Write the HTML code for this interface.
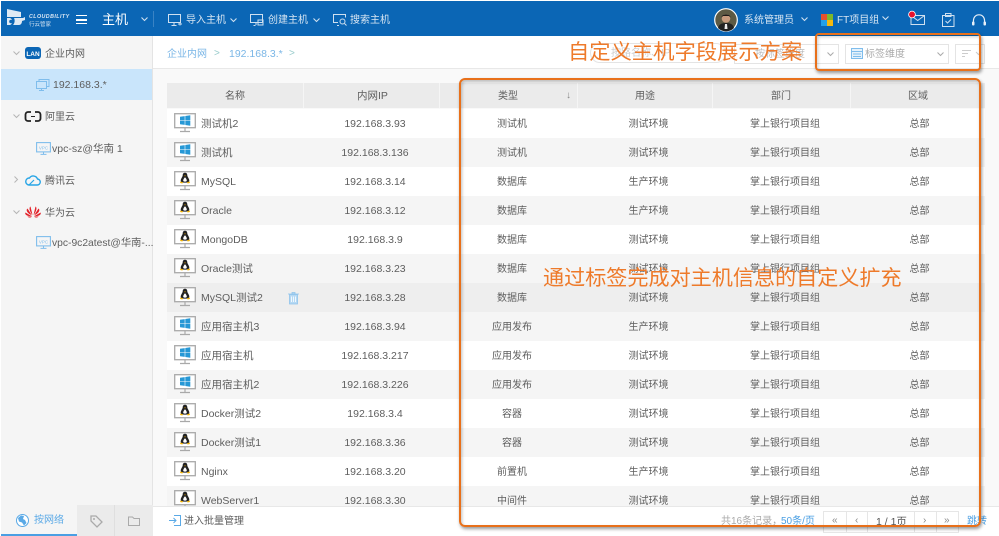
<!DOCTYPE html>
<html lang="zh"><head><meta charset="utf-8"><style>
html,body{margin:0;padding:0;width:999px;height:536px;overflow:hidden;background:#fff}
body{position:relative;font:10px/14px "Liberation Sans","Noto Sans CJK SC",sans-serif;color:#5e5e5e;filter:blur(.3px)}
.a{position:absolute;white-space:nowrap}
svg{position:absolute;overflow:visible}
#rows{position:absolute;left:167px;top:109px;width:818px;height:397px;overflow:hidden}
.r{display:flex;height:29px;line-height:31px;background:#fff;position:relative}
.r:nth-child(even){background:#f5f5f5}
.r.h{background:#eee}
.r svg{left:7px;top:4px}
.r b{font-weight:400;text-align:center;display:block}
.n{width:140px;text-align:left!important;padding-left:34px;box-sizing:border-box;font-size:10.5px;line-height:30px}
.c2{width:136px;font-size:10.5px}.c3{width:138px}.c4{width:135px}.c5{width:138px}.c6{width:131px}
.s{stroke:#cfe0f0;fill:none;stroke-width:1}
.chev{fill:none;stroke:#cfe0f0;stroke-width:1.1}
</style></head><body>
<svg width="0" height="0" style="position:absolute"><defs>
<symbol id="win" viewBox="0 0 22 20"><rect x=".7" y=".7" width="20.6" height="14" fill="#fff" stroke="#a9a9a9" stroke-width="1.3"/><path d="M11 15v3M6 18.5h10" stroke="#a9a9a9" stroke-width="1.2"/><path d="M6 3.800l4.700-.7v4.100H6zM11.300 3l5-.7v4.900h-5zM6 7.800h4.700v4.100L6 11.200zM11.300 7.800h5v4.900l-5-.7z" fill="#2698d6"/></symbol>
<symbol id="lin" viewBox="0 0 22 20"><rect x=".7" y=".7" width="20.6" height="14" fill="#fff" stroke="#a9a9a9" stroke-width="1.3"/><path d="M11 15v3M6 18.500h10" stroke="#a9a9a9" stroke-width="1.2"/><path d="M11 1.800c-1.600 0-2.300 1.100-2.300 2.600 0 1.400-2 3.200-2 5.300 0 1 .8 1.900 4.300 1.900s4.300-.9 4.300-1.900c0-2.100-2-3.900-2-5.300 0-1.500-.7-2.600-2.300-2.600z" fill="#222"/><path d="M11 6.200c-1.200 1.100-1.800 2.300-1.800 3.500s3.600 1.200 3.600 0-.6-2.400-1.800-3.500z" fill="#fff"/><path d="M10.100 4.500h1.800l-.9 1zM6.400 10.500l2.600.7-.6 1.300-2.300-.5zM15.600 10.500l-2.600.7.600 1.300 2.300-.5z" fill="#f4b400"/></symbol>
<symbol id="vpc" viewBox="0 0 15 13"><rect x=".6" y=".6" width="13.800" height="9.300" fill="none" stroke="#7fbdec" stroke-width="1.100"/><path d="M7.500 10v2M4.500 12.400h6" stroke="#7fbdec"/><text x="7.500" y="7.600" font-size="4.500" text-anchor="middle" fill="#7fbdec" font-family="Liberation Sans">VPC</text></symbol>
</defs></svg>

<!-- top bar -->
<div class="a" style="left:1px;top:1px;width:998px;height:35px;background:#0b66b5"></div>
<svg style="left:7px;top:9px" width="20" height="20" viewBox="0 0 20 20"><path d="M0 0l14 3v5l-14 0zM0 9h3c3 1 3 6 0 7H0zM7 9h9l2-1v3l-3 1c0 2-1 4-3 4H6c2-2 2-5 1-7z" fill="#dfeaf4"/><circle cx="4" cy="12.500" r="1.800" fill="#0b66b5"/></svg>
<div class="a" style="left:29px;top:14px;font:italic 700 5.300px/7px 'Liberation Sans',sans-serif;color:#dbe8f4;letter-spacing:.45px">CLOUDBILITY</div>
<div class="a" style="left:29px;top:21px;font-size:5.500px;line-height:8px;color:#cfe0f0">行云管家</div>
<div class="a" style="left:76px;top:15px;width:11px;height:9px;border-top:1.500px solid #fff;border-bottom:1.500px solid #fff;box-sizing:border-box"></div>
<div class="a" style="left:76px;top:19px;width:11px;height:1.500px;background:#fff"></div>
<div class="a" style="left:102px;top:12px;font-size:13px;line-height:16px;color:#fff">主机</div>
<svg style="left:141px;top:17px" width="7" height="5"><path class="chev" d="M.5 .5L3.500 3.500 6.500 .5"/></svg>
<div class="a" style="left:153px;top:11px;width:1px;height:16px;background:#3a83c4"></div>

<svg style="left:168px;top:14px" width="14" height="12"><rect class="s" x=".5" y=".5" width="12" height="8"/><path class="s" d="M6 9v2M3.500 11.500h5M10 10h4M12 8.500v3"/></svg>
<div class="a" style="left:186px;top:14px;color:#d7e5f2">导入主机</div>
<svg style="left:230px;top:18px" width="7" height="5"><path class="chev" d="M.5 .5L3.500 3.500 6.500 .5"/></svg>
<svg style="left:250px;top:14px" width="14" height="12"><rect class="s" x=".5" y=".5" width="12" height="8"/><path class="s" d="M6 9v2M3.500 11.500h2"/><rect class="s" x="8" y="6" width="5" height="5" fill="#0b66b5"/></svg>
<div class="a" style="left:268px;top:14px;color:#d7e5f2">创建主机</div>
<svg style="left:313px;top:18px" width="7" height="5"><path class="chev" d="M.5 .5L3.500 3.500 6.500 .5"/></svg>
<svg style="left:333px;top:14px" width="14" height="12"><path class="s" d="M5 8.500H.5v-8h12v3M4 11.500h2"/><circle class="s" cx="9.500" cy="7.500" r="2.500"/><path class="s" d="M11.500 9.500l2 2"/></svg>
<div class="a" style="left:350px;top:14px;color:#d7e5f2">搜索主机</div>

<svg style="left:714px;top:8px" width="24" height="24" viewBox="0 0 24 24"><circle cx="12" cy="12" r="11.300" fill="#5d5a44" stroke="#fff" stroke-width="1.200"/><path d="M4 20c1-4 4-5 8-5s7 1 8 5a11 11 0 0 1-16 0z" fill="#222"/><circle cx="12" cy="10.500" r="4.300" fill="#c79a7c"/><path d="M7.500 9.500c0-4 9-4 9 0l-1.500-1.500h-6z" fill="#1d1a18"/><path d="M11 16h2l.5 5h-3z" fill="#eee"/></svg>
<div class="a" style="left:744px;top:14px;color:#d7e5f2">系统管理员</div>
<svg style="left:801px;top:17px" width="7" height="5"><path class="chev" d="M.5 .5L3.500 3.500 6.500 .5"/></svg>
<div class="a" style="left:821px;top:14px;width:5.500px;height:5.500px;background:#e8502a"></div>
<div class="a" style="left:827px;top:14px;width:5.500px;height:5.500px;background:#7db82a"></div>
<div class="a" style="left:821px;top:20px;width:5.500px;height:5.500px;background:#23a0e8"></div>
<div class="a" style="left:827px;top:20px;width:5.500px;height:5.500px;background:#f5b90f"></div>
<div class="a" style="left:837px;top:14px;color:#d7e5f2">FT项目组</div>
<svg style="left:882px;top:16px" width="7" height="5"><path class="chev" d="M.5 .5L3.500 3.500 6.500 .5"/></svg>
<svg style="left:908px;top:11px" width="18" height="15"><path class="s" d="M3 4.500v9h13.500v-9zM3 4.500l6.700 5 6.800-5"/><circle cx="4" cy="3.500" r="3.400" fill="#e8112d" stroke="#fff" stroke-width=".8"/></svg>
<svg style="left:942px;top:13px" width="13" height="14"><path class="s" d="M.5 2.500h11.500v11H.500zM3.500 .5h5.500v3H3.500zM3.500 8l2 2 3.500-3.500"/></svg>
<svg style="left:971px;top:14px" width="16" height="13"><path d="M2.500 8C2 3.500 4.500 .8 8 .8s6 2.700 5.500 7.200" fill="none" stroke="#e8f0f8" stroke-width="1.200"/><rect x="1" y="7.500" width="2.500" height="4" rx="1" fill="#e8f0f8"/><rect x="12.500" y="7.500" width="2.500" height="4" rx="1" fill="#e8f0f8"/></svg>

<!-- sidebar -->
<div class="a" style="left:1px;top:36px;width:152px;height:500px;background:#f5f5f5;border-right:1px solid #e4e4e4;box-sizing:border-box"></div>
<div class="a" style="left:1px;top:69px;width:151px;height:31px;background:#c9e5fb"></div>
<svg style="left:13px;top:51px" width="7" height="5"><path fill="none" stroke="#b5b5b5" d="M.5 .5L3.500 3.500 6.500 .5"/></svg>
<div class="a" style="left:25px;top:47px;width:16px;height:12px;border-radius:3px;background:#0b66b5;color:#fff;font:700 6.500px/15px 'Liberation Sans',sans-serif;text-align:center;overflow:hidden">LAN</div>
<div class="a" style="left:45px;top:48px">企业内网</div>
<svg style="left:36px;top:79px" width="14" height="12"><rect x="3" y=".5" width="10" height="7" fill="none" stroke="#7fbdec"/><rect x=".5" y="2.500" width="10" height="7" fill="#c9e5fb" stroke="#7fbdec"/><path d="M5.500 9.500v2M3 11.500h5" stroke="#7fbdec"/></svg>
<div class="a" style="left:53px;top:78px;font-size:10.500px">192.168.3.*</div>
<svg style="left:13px;top:114px" width="7" height="5"><path fill="none" stroke="#b5b5b5" d="M.5 .5L3.500 3.500 6.500 .5"/></svg>
<svg style="left:25px;top:111px" width="16" height="11"><path d="M6 1H3a2.500 2.500 0 0 0-2.500 2.500v4A2.500 2.500 0 0 0 3 10h3M10 1h3a2.500 2.500 0 0 1 2.500 2.500v4A2.500 2.500 0 0 1 13 10h-3" fill="none" stroke="#222" stroke-width="1.800"/><path d="M6 5.500h4" stroke="#222"/></svg>
<div class="a" style="left:45px;top:111px">阿里云</div>
<svg style="left:36px;top:142px" width="15" height="13"><use href="#vpc"/></svg>
<div class="a" style="left:52px;top:142px;font-size:10.500px">vpc-sz@华南 1</div>
<svg style="left:14px;top:176px" width="5" height="7"><path fill="none" stroke="#b5b5b5" d="M.5 .5L3.500 3.500 .5 6.500"/></svg>
<svg style="left:25px;top:174px" width="16" height="12"><path d="M4 11h8a3 3 0 0 0 .5-6A4.500 4.500 0 0 0 4.500 4 3.500 3.500 0 0 0 4 11z" fill="none" stroke="#28a5e6" stroke-width="1.400"/><path d="M4 11l5-5" stroke="#28a5e6" stroke-width="1.200"/></svg>
<div class="a" style="left:45px;top:175px">腾讯云</div>
<svg style="left:13px;top:210px" width="7" height="5"><path fill="none" stroke="#b5b5b5" d="M.5 .5L3.500 3.500 6.500 .5"/></svg>
<svg style="left:25px;top:205px" width="16" height="13" viewBox="0 0 16 13"><path d="M7.500 10L5.500 1.500C4 2 4 6 7.500 10zM8.500 10l2-8.500C12 2 12 6 8.500 10zM7 10.500L2.500 3.500C.5 5 2 8 7 10.500zM9 10.500l4.500-7C15.500 5 14 8 9 10.500zM6.500 11L.3 7.500C-.5 10 3 11.500 6.500 11zM9.500 11l6.200-3.500C16.500 10 13 11.500 9.500 11zM7 11.500H2.500C3.500 13 6 12.800 7 11.500zM9 11.500h4.500C12.500 13 10 12.800 9 11.500z" fill="#e3222a"/></svg>
<div class="a" style="left:45px;top:207px">华为云</div>
<svg style="left:36px;top:236px" width="15" height="13"><use href="#vpc"/></svg>
<div class="a" style="left:52px;top:237px;font-size:10.300px">vpc-9c2atest@华南-...</div>

<div class="a" style="left:77px;top:505px;width:76px;height:31px;background:#ebebeb"></div>
<div class="a" style="left:114px;top:505px;width:1px;height:31px;background:#dfdfdf"></div>
<div class="a" style="left:1px;top:534px;width:76px;height:2px;background:#4a9fe3"></div>
<svg style="left:16px;top:514px" width="13" height="13"><circle cx="6.500" cy="6.500" r="6" fill="#fff" stroke="#5aa9e6"/><path d="M2 4l3-2.500 3 .5-1 3 2 1 1.500 3-2.500 2.500-2-3-3-1z" fill="#5aa9e6"/></svg>
<div class="a" style="left:34px;top:514px;color:#5aa9e6">按网络</div>
<svg style="left:90px;top:515px" width="13" height="13"><path d="M1 1h5l6 6-5 5-6-6z" fill="none" stroke="#aaa" stroke-width="1.300"/><circle cx="4" cy="4" r="1" fill="#aaa"/></svg>
<svg style="left:128px;top:516px" width="12" height="10"><path d="M.5 1h4l1.500 1.500h5.500v7H.5z" fill="none" stroke="#aaa"/></svg>

<!-- main -->
<div class="a" style="left:153px;top:36px;width:846px;height:500px;background:#f9f9f9"></div>
<div class="a" style="left:153px;top:36px;width:846px;height:32px;background:#fff;border-bottom:1px solid #e8e8e8"></div>
<div class="a" style="left:167px;top:48px;color:#7ab6e6">企业内网</div>
<div class="a" style="left:214px;top:47px;color:#9cc">&gt;</div>
<div class="a" style="left:229px;top:47px;color:#7ab6e6;font-size:10.500px">192.168.3.*</div>
<div class="a" style="left:289px;top:47px;color:#9cc">&gt;</div>

<div class="a" style="left:590px;top:43px;width:136px;height:20px;border:1px solid #e4e4e4;border-radius:10px;box-sizing:border-box;color:#ccc;padding:3px 0 0 20px">按路名称、IP</div>
<div class="a" style="left:734px;top:44px;width:105px;height:20px;border:1px solid #e4e4e4;box-sizing:border-box;color:#bbb;padding:3px 0 0 20px">按标签维度</div>
<svg style="left:827px;top:52px" width="7" height="5"><path fill="none" stroke="#aaa" d="M.5 .5L3.500 3.500 6.500 .5"/></svg>
<div class="a" style="left:845px;top:44px;width:104px;height:20px;border:1px solid #e4e4e4;box-sizing:border-box;color:#aaa;padding:3px 0 0 19px">标签维度</div>
<svg style="left:851px;top:48px" width="12" height="11"><rect x=".5" y=".5" width="11" height="10" fill="#e6f2fb" stroke="#7fbdec"/><path d="M.5 3.500h11M2 6h8M2 8.500h8" stroke="#7fbdec"/></svg>
<svg style="left:937px;top:52px" width="7" height="5"><path fill="none" stroke="#aaa" d="M.5 .5L3.500 3.500 6.500 .5"/></svg>
<div class="a" style="left:955px;top:44px;width:30px;height:20px;border:1px solid #e4e4e4;box-sizing:border-box"></div>
<svg style="left:962px;top:50px" width="20" height="8"><path d="M0 .5h9M0 3.500h6M0 6.500h3" stroke="#ccc"/><path fill="none" stroke="#ccc" d="M14 2l2.500 2.500L19 2"/></svg>

<!-- table header -->
<div class="a" style="left:167px;top:83px;width:818px;height:25px;background:#ebebeb"></div>
<div class="a" style="left:303px;top:83px;width:1px;height:25px;background:#f5f5f5"></div>
<div class="a" style="left:439px;top:83px;width:1px;height:25px;background:#f5f5f5"></div>
<div class="a" style="left:577px;top:83px;width:1px;height:25px;background:#f5f5f5"></div>
<div class="a" style="left:712px;top:83px;width:1px;height:25px;background:#f5f5f5"></div>
<div class="a" style="left:850px;top:83px;width:1px;height:25px;background:#f5f5f5"></div>
<div class="a" style="left:225px;top:90px">名称</div>
<div class="a" style="left:357px;top:89px;font-size:10.500px">内网IP</div>
<div class="a" style="left:498px;top:90px">类型</div>
<div class="a" style="left:566px;top:89px;color:#888">↓</div>
<div class="a" style="left:635px;top:90px">用途</div>
<div class="a" style="left:771px;top:90px">部门</div>
<div class="a" style="left:908px;top:90px">区域</div>

<div id="rows">
<div class="r"><svg width="22" height="20"><use href="#win"/></svg><b class="n">测试机2</b><b class="c2">192.168.3.93</b><b class="c3">测试机</b><b class="c4">测试环境</b><b class="c5">掌上银行项目组</b><b class="c6">总部</b></div>
<div class="r"><svg width="22" height="20"><use href="#win"/></svg><b class="n">测试机</b><b class="c2">192.168.3.136</b><b class="c3">测试机</b><b class="c4">测试环境</b><b class="c5">掌上银行项目组</b><b class="c6">总部</b></div>
<div class="r"><svg width="22" height="20"><use href="#lin"/></svg><b class="n">MySQL</b><b class="c2">192.168.3.14</b><b class="c3">数据库</b><b class="c4">生产环境</b><b class="c5">掌上银行项目组</b><b class="c6">总部</b></div>
<div class="r"><svg width="22" height="20"><use href="#lin"/></svg><b class="n">Oracle</b><b class="c2">192.168.3.12</b><b class="c3">数据库</b><b class="c4">生产环境</b><b class="c5">掌上银行项目组</b><b class="c6">总部</b></div>
<div class="r"><svg width="22" height="20"><use href="#lin"/></svg><b class="n">MongoDB</b><b class="c2">192.168.3.9</b><b class="c3">数据库</b><b class="c4">测试环境</b><b class="c5">掌上银行项目组</b><b class="c6">总部</b></div>
<div class="r"><svg width="22" height="20"><use href="#lin"/></svg><b class="n">Oracle测试</b><b class="c2">192.168.3.23</b><b class="c3">数据库</b><b class="c4">测试环境</b><b class="c5">掌上银行项目组</b><b class="c6">总部</b></div>
<div class="r h"><svg width="22" height="20"><use href="#lin"/></svg><b class="n">MySQL测试2</b><b class="c2">192.168.3.28</b><b class="c3">数据库</b><b class="c4">测试环境</b><b class="c5">掌上银行项目组</b><b class="c6">总部</b><svg style="left:121px;top:9px" width="11" height="12"><path d="M0 2h11M4 2V.5h3V2M1.500 2.500h8V12h-8z" fill="#b5d8f3" stroke="#8fc3ec" stroke-width=".8"/><path d="M3.500 4.500v5.500M5.500 4.500v5.500M7.500 4.500v5.500" stroke="#fff" stroke-width=".8"/></svg></div>
<div class="r"><svg width="22" height="20"><use href="#win"/></svg><b class="n">应用宿主机3</b><b class="c2">192.168.3.94</b><b class="c3">应用发布</b><b class="c4">生产环境</b><b class="c5">掌上银行项目组</b><b class="c6">总部</b></div>
<div class="r"><svg width="22" height="20"><use href="#win"/></svg><b class="n">应用宿主机</b><b class="c2">192.168.3.217</b><b class="c3">应用发布</b><b class="c4">测试环境</b><b class="c5">掌上银行项目组</b><b class="c6">总部</b></div>
<div class="r"><svg width="22" height="20"><use href="#win"/></svg><b class="n">应用宿主机2</b><b class="c2">192.168.3.226</b><b class="c3">应用发布</b><b class="c4">测试环境</b><b class="c5">掌上银行项目组</b><b class="c6">总部</b></div>
<div class="r"><svg width="22" height="20"><use href="#lin"/></svg><b class="n">Docker测试2</b><b class="c2">192.168.3.4</b><b class="c3">容器</b><b class="c4">测试环境</b><b class="c5">掌上银行项目组</b><b class="c6">总部</b></div>
<div class="r"><svg width="22" height="20"><use href="#lin"/></svg><b class="n">Docker测试1</b><b class="c2">192.168.3.36</b><b class="c3">容器</b><b class="c4">测试环境</b><b class="c5">掌上银行项目组</b><b class="c6">总部</b></div>
<div class="r"><svg width="22" height="20"><use href="#lin"/></svg><b class="n">Nginx</b><b class="c2">192.168.3.20</b><b class="c3">前置机</b><b class="c4">生产环境</b><b class="c5">掌上银行项目组</b><b class="c6">总部</b></div>
<div class="r"><svg width="22" height="20"><use href="#lin"/></svg><b class="n">WebServer1</b><b class="c2">192.168.3.30</b><b class="c3">中间件</b><b class="c4">测试环境</b><b class="c5">掌上银行项目组</b><b class="c6">总部</b></div>
</div>

<!-- footer -->
<div class="a" style="left:153px;top:506px;width:846px;height:30px;background:#fff;border-top:1px solid #e8e8e8;box-sizing:border-box"></div>
<svg style="left:169px;top:515px" width="12" height="11"><path d="M0 5.500h7M4.500 3l2.500 2.500L4.500 8M5 .5h6.500v10H5" fill="none" stroke="#5aa9e6"/></svg>
<div class="a" style="left:184px;top:515px">进入批量管理</div>
<div class="a" style="left:721px;top:515px;color:#aaa">共16条记录，</div>
<div class="a" style="left:781px;top:515px;color:#4a9fe3">50条/页</div>
<div class="a" style="left:823px;top:511px;width:136px;height:22px;border:1px solid #e6e6e6;box-sizing:border-box"></div>
<div class="a" style="left:846px;top:511px;width:1px;height:22px;background:#e6e6e6"></div>
<div class="a" style="left:867px;top:511px;width:1px;height:22px;background:#e6e6e6"></div>
<div class="a" style="left:914px;top:511px;width:1px;height:22px;background:#e6e6e6"></div>
<div class="a" style="left:936px;top:511px;width:1px;height:22px;background:#e6e6e6"></div>
<div class="a" style="left:832px;top:514px;color:#888">«</div>
<div class="a" style="left:855px;top:514px;color:#888">‹</div>
<div class="a" style="left:876px;top:515px;color:#555;font-size:10.500px">1 / 1页</div>
<div class="a" style="left:923px;top:514px;color:#888">›</div>
<div class="a" style="left:944px;top:514px;color:#888">»</div>
<div class="a" style="left:967px;top:515px;color:#4a9fe3">跳转</div>

<!-- annotations -->
<div class="a" style="left:815px;top:33px;width:166px;height:38px;border:2px solid #e8701a;border-radius:4px;box-sizing:border-box;box-shadow:1px 2px 3px rgba(0,0,0,.4),inset 1px 2px 3px rgba(0,0,0,.2)"></div>
<div class="a" style="left:459px;top:78px;width:522px;height:449px;border:2px solid #e8701a;border-radius:6px;box-sizing:border-box;box-shadow:1px 2px 3px rgba(0,0,0,.4),inset 1px 2px 3px rgba(0,0,0,.25)"></div>
<div class="a" style="left:568px;top:38px;font-size:21.300px;line-height:28px;color:#ee7a2a">自定义主机字段展示方案</div>
<div class="a" style="left:543px;top:265px;font-size:21.100px;line-height:28px;color:#ee7a2a">通过标签完成对主机信息的自定义扩充</div>
</body></html>
